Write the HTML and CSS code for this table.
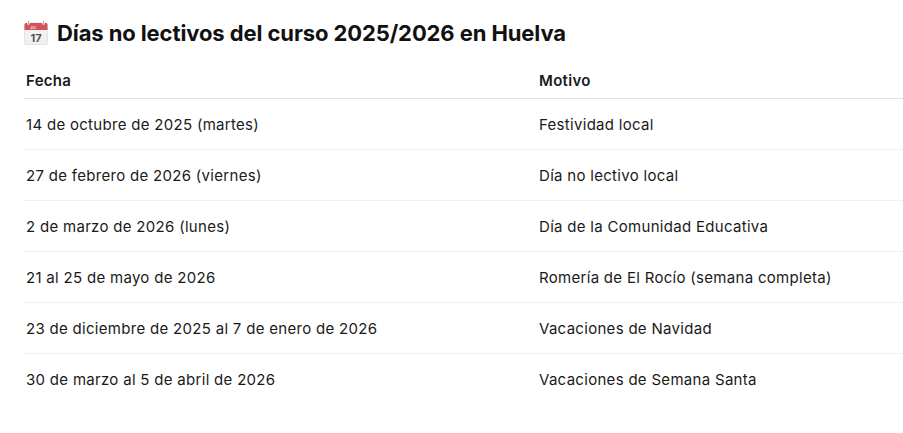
FILE: index.html
```html
<!DOCTYPE html>
<html lang="es">
<head>
<meta charset="utf-8">
<link rel="stylesheet" href="styles.css">
</head>
<body>
<div class="page">
  <h2 class="title">
    <svg class="cal" width="24" height="24" viewBox="0 0 24 24" aria-hidden="true">
      <rect x="0.5" y="2" width="23" height="21.5" rx="1.5" fill="#f1f1f1" stroke="#d6d6d6" stroke-width="0.6"/>
      <path d="M2 2h20a1.5 1.5 0 0 1 1.5 1.5V9H0.5V3.5A1.5 1.5 0 0 1 2 2z" fill="#d0545a"/>
      <circle cx="4.5" cy="2.6" r="1.2" fill="#fff"/>
      <circle cx="19.5" cy="2.6" r="1.2" fill="#fff"/>
      <rect x="4.1" y="0" width="0.8" height="3" fill="#9a9a9a"/>
      <rect x="19.1" y="0" width="0.8" height="3" fill="#9a9a9a"/>
      <text x="6" y="7.8" font-family="Inter, sans-serif" font-size="3.6" fill="#f6d6d6">JUL</text>
      <text x="12" y="20.8" text-anchor="middle" font-family="Inter, sans-serif" font-size="11" fill="#555">17</text>
    </svg>
    <span>Días no lectivos del curso 2025/2026 en Huelva</span>
  </h2>
  <table class="tbl">
    <thead>
      <tr><th class="c1">Fecha</th><th>Motivo</th></tr>
    </thead>
    <tbody>
      <tr><td class="c1">14 de octubre de 2025 (martes)</td><td>Festividad local</td></tr>
      <tr><td class="c1">27 de febrero de 2026 (viernes)</td><td>Día no lectivo local</td></tr>
      <tr><td class="c1">2 de marzo de 2026 (lunes)</td><td>Día de la Comunidad Educativa</td></tr>
      <tr><td class="c1">21 al 25 de mayo de 2026</td><td>Romería de El Rocío (semana completa)</td></tr>
      <tr><td class="c1">23 de diciembre de 2025 al 7 de enero de 2026</td><td>Vacaciones de Navidad</td></tr>
      <tr class="last"><td class="c1">30 de marzo al 5 de abril de 2026</td><td>Vacaciones de Semana Santa</td></tr>
    </tbody>
  </table>
</div>
</body>
</html>
```
FILE: styles.css
```css
html, body {
  margin: 0;
  padding: 0;
  background: #fff;
}
body {
  font-family: Inter, "Noto Sans", sans-serif;
  color: #1a1a1a;
}
.page {
  padding: 19px 0 0 24px;
}
.title {
  display: flex;
  align-items: center;
  gap: 9px;
  margin: 0;
  font-size: 22px;
  font-weight: 700;
  line-height: 28px;
  color: #111;
  letter-spacing: -0.1px;
}
.cal {
  flex: none;
}
.tbl {
  margin-top: 15px;
  width: 879px;
  border-collapse: collapse;
  font-size: 15px;
  letter-spacing: 0.3px;
}
.tbl th, .tbl td {
  text-align: left;
  padding: 0;
  vertical-align: middle;
}
.tbl th {
  height: 36px;
  font-weight: 600;
  border-bottom: 1px solid #e3e3e3;
}
.tbl .c1 {
  width: 513px;
  padding-left: 2px;
}
.tbl td {
  height: 50px;
  border-bottom: 1px solid #f0f0f0;
}
.tbl tr.last td {
  border-bottom: none;
}
```
